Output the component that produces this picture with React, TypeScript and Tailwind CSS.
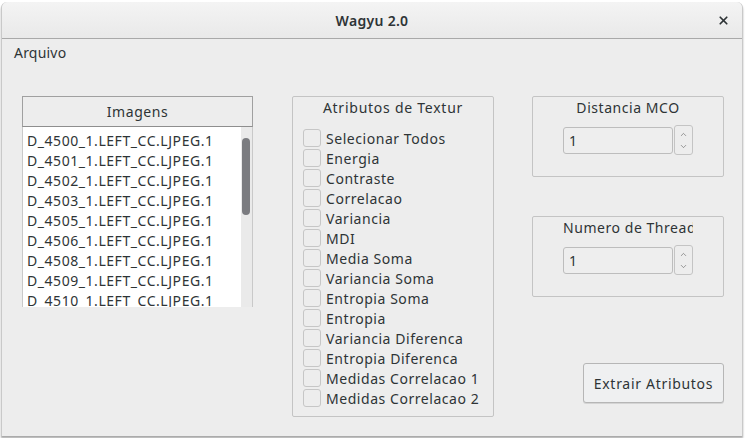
import { ChevronUp, ChevronDown, X } from "lucide-react";

const images = [
  "D_4500_1.LEFT_CC.LJPEG.1",
  "D_4501_1.LEFT_CC.LJPEG.1",
  "D_4502_1.LEFT_CC.LJPEG.1",
  "D_4503_1.LEFT_CC.LJPEG.1",
  "D_4505_1.LEFT_CC.LJPEG.1",
  "D_4506_1.LEFT_CC.LJPEG.1",
  "D_4508_1.LEFT_CC.LJPEG.1",
  "D_4509_1.LEFT_CC.LJPEG.1",
  "D_4510_1.LEFT_CC.LJPEG.1",
];

const attrs = [
  "Selecionar Todos",
  "Energia",
  "Contraste",
  "Correlacao",
  "Variancia",
  "MDI",
  "Media Soma",
  "Variancia Soma",
  "Entropia Soma",
  "Entropia",
  "Variancia Diferenca",
  "Entropia Diferenca",
  "Medidas Correlacao 1",
  "Medidas Correlacao 2",
];

function Spinner() {
  return (
    <div className="flex items-center gap-[1px] ml-[30px] mt-[7px]">
      <div className="w-[110px] h-[27px] bg-[#eeeeee] border border-[#bdbdbd] rounded-[3px] flex items-center pl-[5px] text-[14px] text-[#2e3436]">
        1
      </div>
      <div className="w-[19px] h-[30px] border border-[#c4c4c4] rounded-[3px] bg-[#ededed] flex flex-col items-center justify-center text-[#555]">
        <ChevronUp size={9} strokeWidth={1.5} />
        <ChevronDown size={9} strokeWidth={1.5} className="mt-[3px]" />
      </div>
    </div>
  );
}

export default function App() {
  return (
    <div
      className="w-[745px] h-[438px] bg-white overflow-hidden"
      style={{ fontFamily: '"Noto Sans", "Open Sans", sans-serif' }}
    >
      <div className="ml-[1px] mt-[2px] w-[742px] h-[434px] bg-[#ededed] rounded-t-[6px] border-x border-[#c9c9c9] shadow-[0_2px_2px_rgba(0,0,0,0.35)] flex flex-col tracking-[0.55px]">
        <div className="h-[37px] rounded-t-[6px] bg-gradient-to-b from-[#f4f4f4] to-[#e9e9e9] border-b border-[#a9a9a9] flex items-center relative">
          <div className="flex-1 text-center text-[14px] font-semibold text-[#2e3436] tracking-[0.3px]">Wagyu 2.0</div>
          <X size={13} strokeWidth={3.2} className="absolute right-[12px] top-[12px] text-[#2e3436]" />
        </div>
        <div className="h-[27px] flex items-center pl-[12px] text-[14px] text-[#2e3436] tracking-[0.2px]">Arquivo</div>
        <div className="flex pt-[30px] pl-[20px]">
          <div className="w-[231px] flex flex-col">
            <div className="h-[31px] border border-[#a0a0a0] border-b-[#8e8e8e] bg-[#ededed] flex items-center justify-center text-[14px] text-[#2e3436]">
              Imagens
            </div>
            <div className="h-[180px] bg-white border-x border-[#c9c9c9] flex overflow-hidden">
              <div className="flex-1 pt-[4px] pl-[4px] text-[14px] text-[#2e3436] leading-[20px] overflow-hidden">
                {images.map((n) => (
                  <div key={n} className="whitespace-nowrap">{n}</div>
                ))}
              </div>
              <div className="w-[11px] bg-[#eaeaea] pt-[11px] pl-[1px] pr-[2px]">
                <div className="h-[77px] rounded-full bg-[#7b7c80]" />
              </div>
            </div>
          </div>
          <div className="ml-[39px] w-[202px] h-[321px] border border-[#c4c4c4] rounded-[2px] flex flex-col">
            <div className="text-center text-[14px] text-[#2e3436] h-[23px] tracking-[0.75px]">Atributos de Textur</div>
            <div className="mt-[8px] pl-[10px] flex flex-col">
              {attrs.map((a) => (
                <div key={a} className="h-[20px] flex items-center">
                  <div className="w-[18px] h-[18px] border border-[#c6c6c6] rounded-[3px] bg-[#ededed]" />
                  <span className="ml-[5px] text-[14px] text-[#2e3436] whitespace-nowrap">{a}</span>
                </div>
              ))}
            </div>
          </div>
          <div className="ml-[38px] flex flex-col">
            <div className="w-[192px] h-[81px] border border-[#c4c4c4] rounded-[2px]">
              <div className="text-center text-[14px] text-[#2e3436] h-[21px]">Distancia MCO</div>
              <Spinner />
            </div>
            <div className="mt-[39px] w-[192px] h-[81px] border border-[#c4c4c4] rounded-[2px]">
              <div className="ml-[30px] w-[130px] overflow-hidden text-[14px] text-[#2e3436] h-[21px] whitespace-nowrap">Numero de Threads</div>
              <Spinner />
            </div>
            <div className="mt-[66px] ml-[51px] w-[141px] h-[40px] border border-[#b6b6b6] rounded-[3px] bg-[#eff0f1] shadow-[0_1px_0_rgba(0,0,0,0.1)] flex items-center justify-center text-[14px] text-[#2e3436] tracking-[0.7px]">
              Extrair Atributos
            </div>
          </div>
        </div>
      </div>
    </div>
  );
}
